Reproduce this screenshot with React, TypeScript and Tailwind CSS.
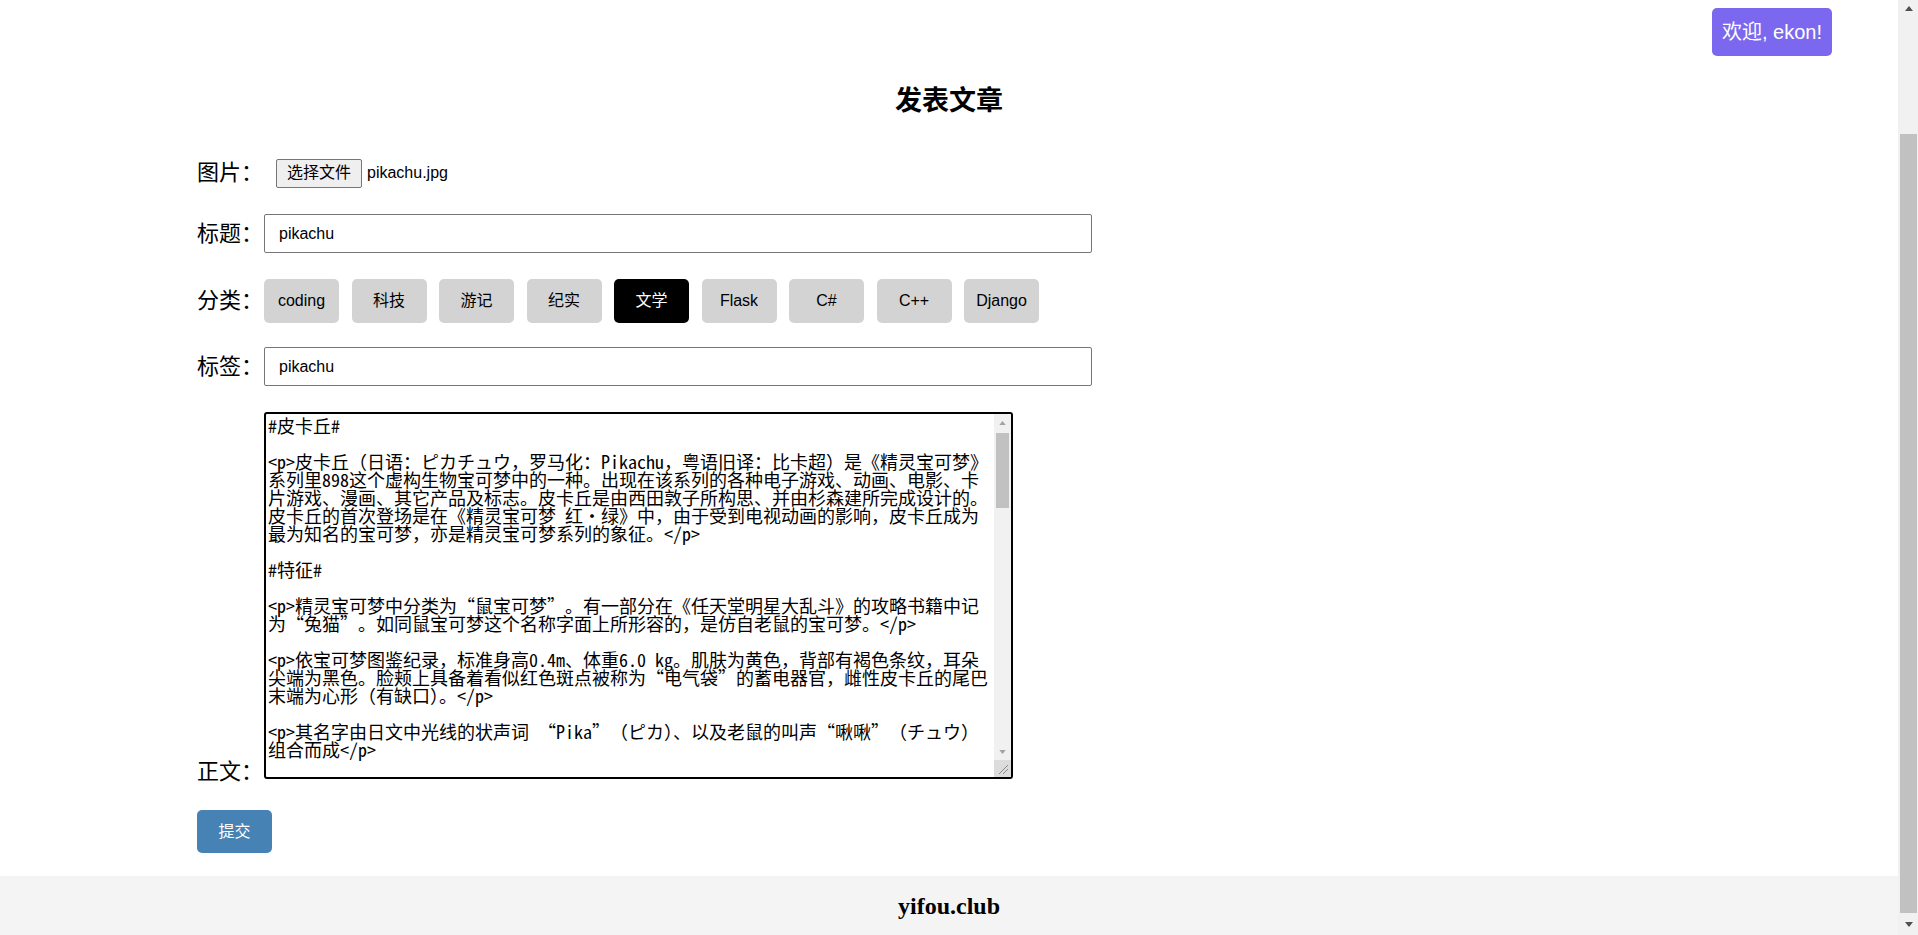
import React from "react";

const sans = { fontFamily: '"Liberation Sans", "Noto Sans CJK SC", sans-serif' };

const textLines = [
  "#皮卡丘#",
  "",
  "<p>皮卡丘（日语：ピカチュウ，罗马化：Pikachu，粤语旧译：比卡超）是《精灵宝可梦》",
  "系列里898这个虚构生物宝可梦中的一种。出现在该系列的各种电子游戏、动画、电影、卡",
  "片游戏、漫画、其它产品及标志。皮卡丘是由西田敦子所构思、并由杉森建所完成设计的。",
  "皮卡丘的首次登场是在《精灵宝可梦 红・绿》中，由于受到电视动画的影响，皮卡丘成为",
  "最为知名的宝可梦，亦是精灵宝可梦系列的象征。</p>",
  "",
  "#特征#",
  "",
  "<p>精灵宝可梦中分类为“鼠宝可梦”。有一部分在《任天堂明星大乱斗》的攻略书籍中记",
  "为“兔猫”。如同鼠宝可梦这个名称字面上所形容的，是仿自老鼠的宝可梦。</p>",
  "",
  "<p>依宝可梦图鉴纪录，标准身高0.4m、体重6.0 kg。肌肤为黄色，背部有褐色条纹，耳朵",
  "尖端为黑色。脸颊上具备着看似红色斑点被称为“电气袋”的蓄电器官，雌性皮卡丘的尾巴",
  "末端为心形（有缺口）。</p>",
  "",
  "<p>其名字由日文中光线的状声词 “Pika”（ピカ）、以及老鼠的叫声“啾啾”（チュウ）",
  "组合而成</p>",
  "",
  "<p>皮卡丘的进化型与退化型</p>",
];

const categories = ["coding", "科技", "游记", "纪实", "文学", "Flask", "C#", "C++", "Django"];

function renderLine(l: string) {
  const parts: React.ReactNode[] = [];
  let buf = "";
  let k = 0;
  for (const ch of l) {
    if (ch === "“" || ch === "”") {
      if (buf) parts.push(buf);
      buf = "";
      parts.push(
        <span
          key={k++}
          className={
            ch === "“"
              ? "inline-block w-[18px] text-right"
              : "inline-block w-[18px] text-left"
          }
        >
          {ch}
        </span>
      );
    } else {
      buf += ch;
    }
  }
  if (buf) parts.push(buf);
  return parts;
}

function Up({ color, w = 8, h = 5 }: { color: string; w?: number; h?: number }) {
  return (
    <svg width={w} height={h} viewBox="0 0 8 5">
      <polygon points="0,5 4,0 8,5" fill={color} />
    </svg>
  );
}
function Down({ color, w = 8, h = 5 }: { color: string; w?: number; h?: number }) {
  return (
    <svg width={w} height={h} viewBox="0 0 8 5">
      <polygon points="0,0 8,0 4,5" fill={color} />
    </svg>
  );
}

export default function App() {
  return (
    <div className="flex h-[935px] w-full overflow-hidden bg-white text-black" style={sans}>
      <div className="flex min-w-0 flex-1 flex-col">
        <header className="flex justify-end pr-[66px] pt-[8px]">
          <button className="flex h-[48px] w-[120px] items-center justify-center rounded-[5px] bg-[#7b68ee] text-[20px] text-white">
            欢迎, ekon!
          </button>
        </header>

        <h2 className="mt-[29px] text-center text-[27px] font-bold leading-[32px]">发表文章</h2>

        <form className="flex flex-col pl-[197px]">
          <div className="mt-[41px] flex h-[30px] items-center">
            <span className="w-[66px] text-[22px] leading-[30px]">图片：</span>
            <span className="ml-[13px] flex h-[29px] items-center rounded-[2px] border border-[#767676] bg-[#efefef] px-[10px] text-[16px]">
              选择文件
            </span>
            <span className="ml-[5px] text-[16px]">pikachu.jpg</span>
          </div>

          <div className="mt-[26px] flex h-[39px] items-center">
            <span className="w-[66px] text-[22px] leading-[30px]">标题：</span>
            <div className="ml-[1px] flex h-[39px] w-[828px] items-center rounded-[2px] border border-[#767676] pl-[14px] text-[16px]">
              pikachu
            </div>
          </div>

          <div className="mt-[26px] flex h-[44px] items-center">
            <span className="w-[66px] text-[22px] leading-[30px]">分类：</span>
            <div className="ml-[1px] flex gap-[12.5px]">
              {categories.map((c) => (
                <button
                  key={c}
                  type="button"
                  className={
                    c === "文学"
                      ? "flex h-[44px] w-[75px] items-center justify-center rounded-[5px] bg-black text-[16px] text-white"
                      : "flex h-[44px] w-[75px] items-center justify-center rounded-[5px] bg-[#d3d3d3] text-[16px] text-black"
                  }
                >
                  {c}
                </button>
              ))}
            </div>
          </div>

          <div className="mt-[24px] flex h-[39px] items-center">
            <span className="w-[66px] text-[22px] leading-[30px]">标签：</span>
            <div className="ml-[1px] flex h-[39px] w-[828px] items-center rounded-[2px] border border-[#767676] pl-[14px] text-[16px]">
              pikachu
            </div>
          </div>

          <div className="mt-[26px] flex items-end">
            <span className="mb-[-4px] w-[66px] text-[22px] leading-[22px]">正文：</span>
            <div className="ml-[1px] flex h-[367px] w-[749px] overflow-hidden rounded-[3px] border-2 border-black">
              <div
                className="min-w-0 flex-1 overflow-hidden whitespace-pre pl-[2px] pt-[2px] text-[18px] leading-[18px] text-black"
                style={{ fontFamily: '"Noto Sans Mono CJK SC", "Noto Sans CJK SC", monospace' }}
              >
                {textLines.map((l, i) => (
                  <div key={i} className="h-[18px]">
                    {renderLine(l)}
                  </div>
                ))}
              </div>
              <div className="flex w-[17px] flex-col bg-[#f1f1f1]">
                <div className="flex h-[17px] items-center justify-center">
                  <Up color="#a3a3a3" w={7} h={4} />
                </div>
                <div className="mx-[2px] mt-[2px] h-[75px] bg-[#c1c1c1]" />
                <div className="flex-1" />
                <div className="flex h-[17px] items-center justify-center">
                  <Down color="#a3a3a3" w={7} h={4} />
                </div>
                <div className="flex h-[17px] items-end justify-end bg-[#dcdcdc] p-[2px]">
                  <svg width="11" height="11" viewBox="0 0 11 11">
                    <line x1="1" y1="10" x2="10" y2="1" stroke="#8a8a8a" strokeWidth="1" />
                    <line x1="5" y1="10" x2="10" y2="5" stroke="#8a8a8a" strokeWidth="1" />
                  </svg>
                </div>
              </div>
            </div>
          </div>

          <div className="mt-[31px]">
            <button
              type="button"
              className="flex h-[43px] w-[75px] items-center justify-center rounded-[5px] bg-[#4682b4] text-[16px] text-white"
            >
              提交
            </button>
          </div>
        </form>

        <footer className="mt-auto flex h-[59px] items-center justify-center bg-[#f4f4f4]">
          <span
            className="text-[24px] font-bold"
            style={{ fontFamily: '"Liberation Serif", "Noto Serif CJK SC", serif' }}
          >
            yifou.club
          </span>
        </footer>
      </div>

      <div className="flex w-[20px] flex-col bg-[#f1f1f1] pl-[2px] pr-[1px]">
        <div className="flex h-[17px] items-center justify-center">
          <Up color="#505050" />
        </div>
        <div className="mt-[117px] h-[779px] bg-[#c1c1c1]" />
        <div className="flex flex-1 items-center justify-center">
          <Down color="#505050" />
        </div>
      </div>
    </div>
  );
}
